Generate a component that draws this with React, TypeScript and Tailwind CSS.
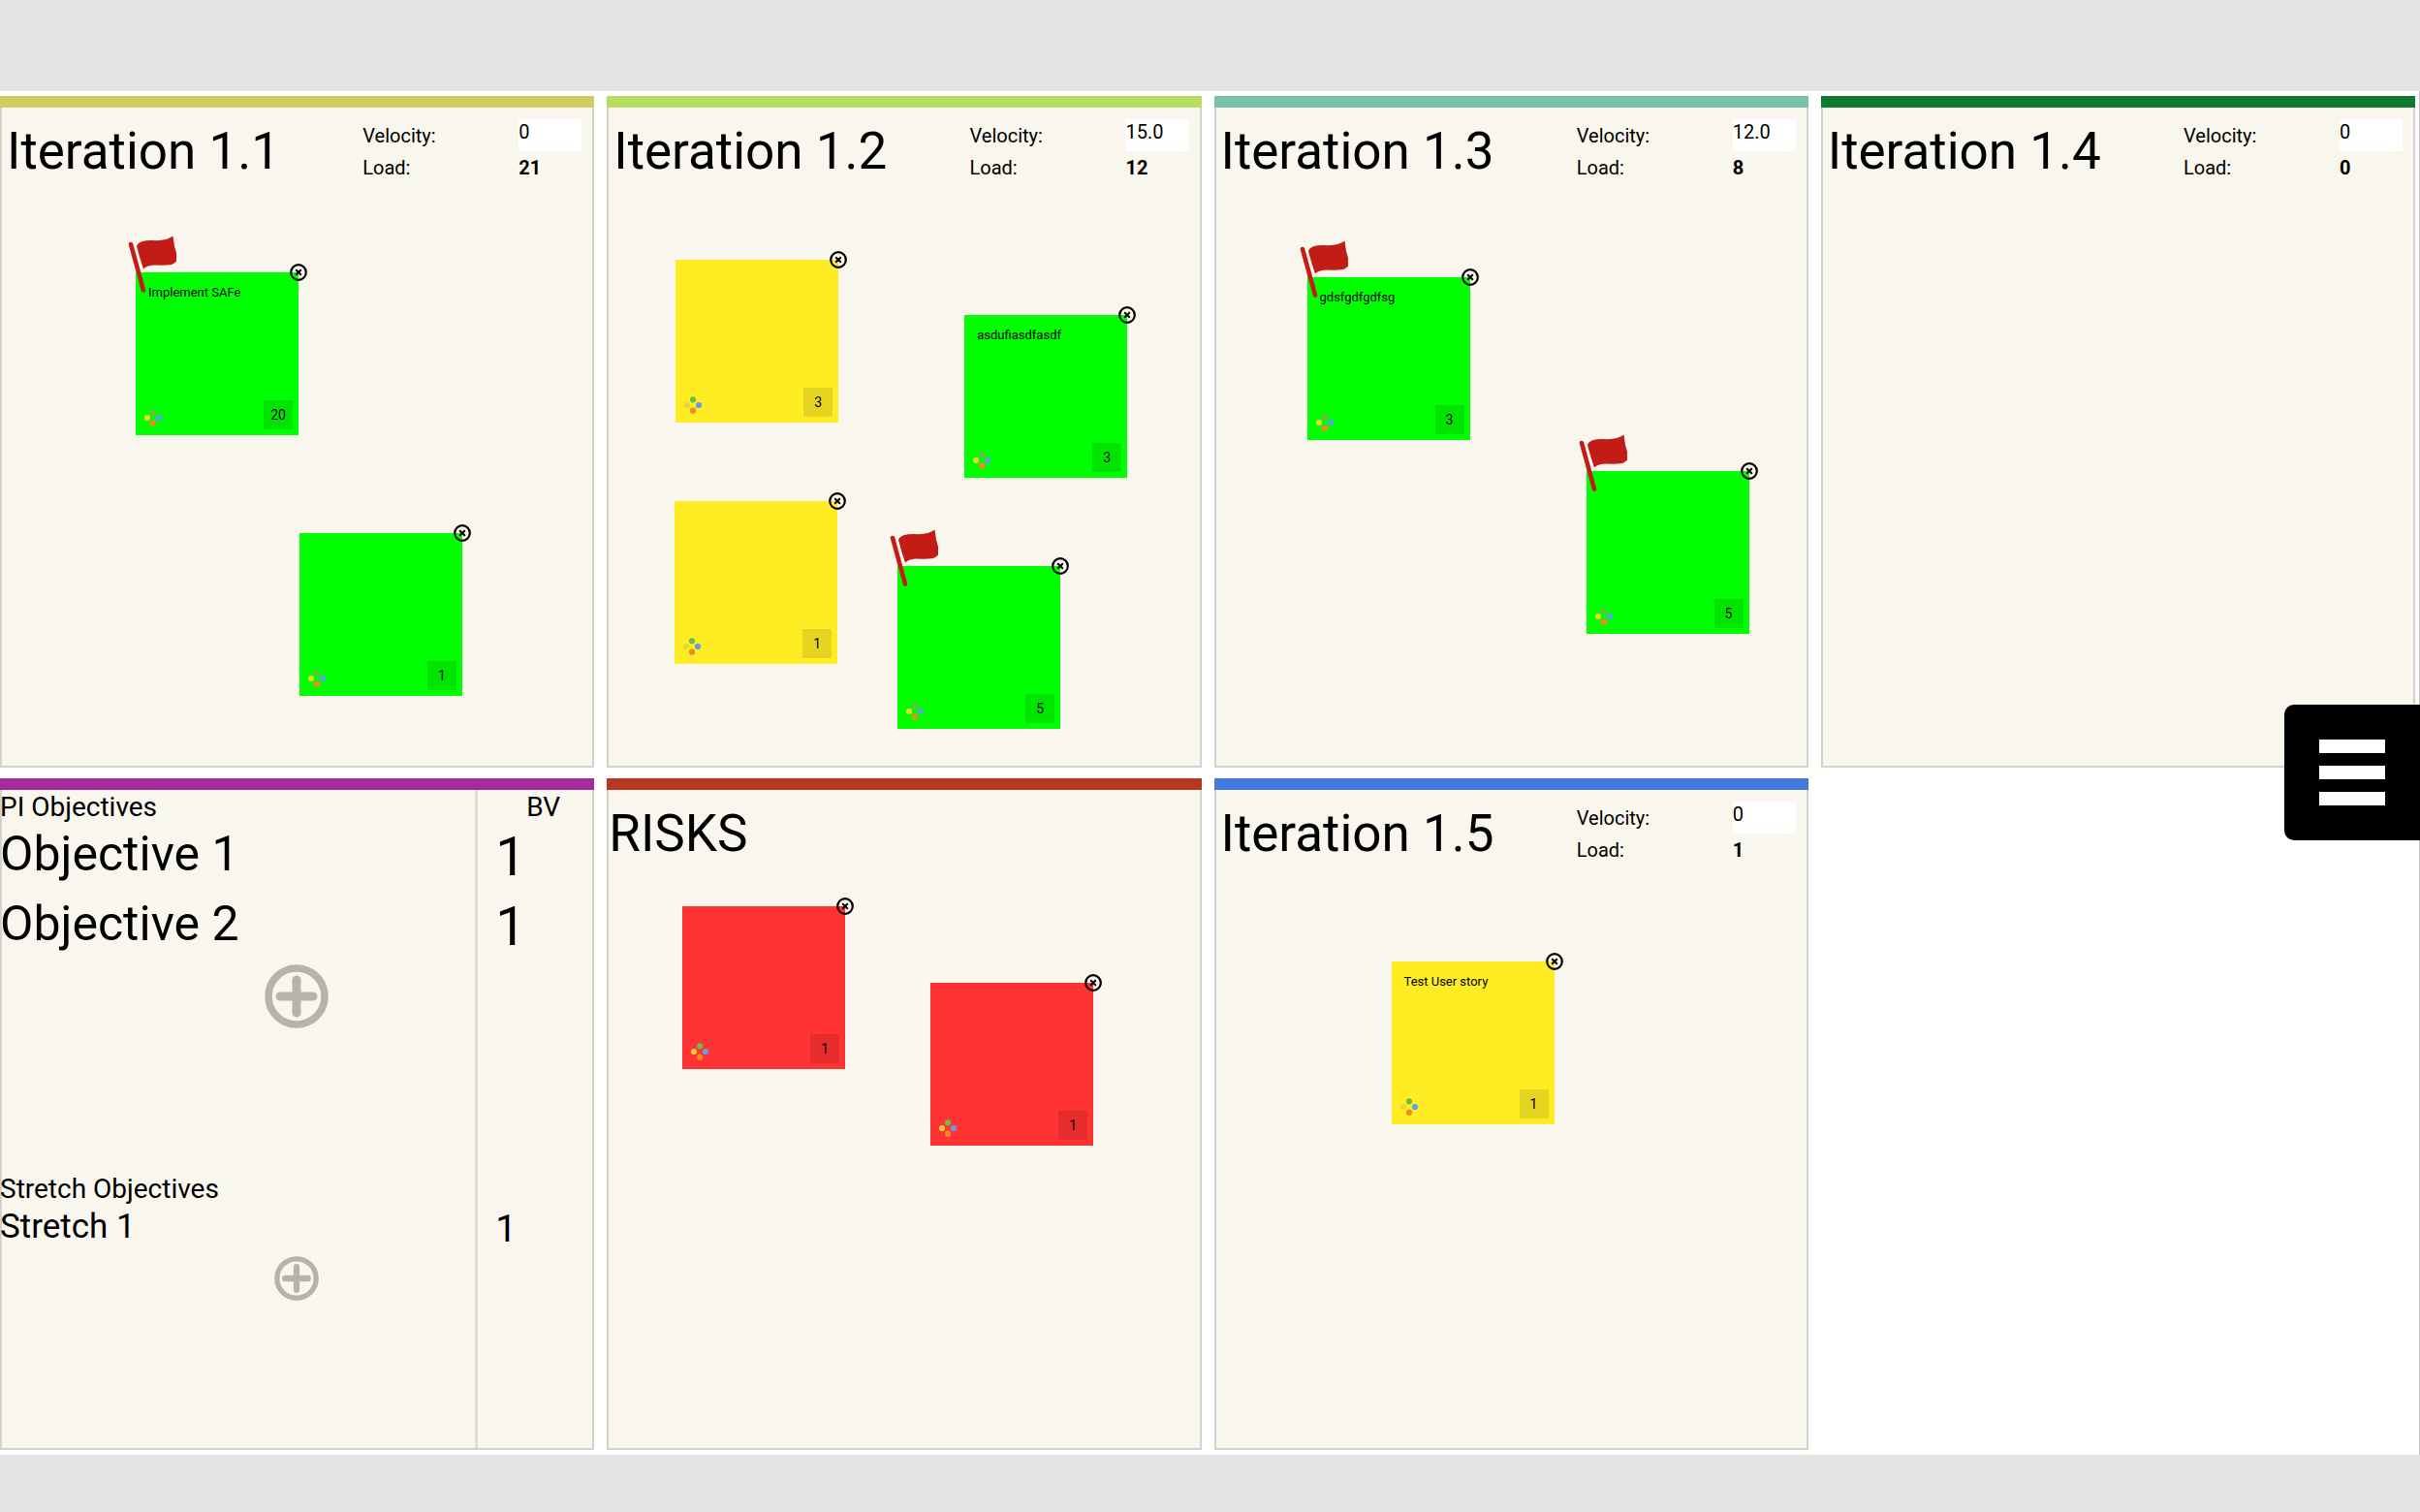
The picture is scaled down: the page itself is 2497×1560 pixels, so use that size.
import React, { useState } from "react";

type Note = {
  x: number;
  y: number;
  color: "green" | "yellow" | "red";
  points: number;
  text?: string;
  flagged?: boolean;
};

type Objective = {
  id: string;
  title: string;
  value: number;
};

const NOTE_COLORS = {
  green: "bg-[#00ff00]",
  yellow: "bg-[#ffed24]",
  red: "bg-[#ff3333]",
};

const FlagIcon = () => (
  <svg
    viewBox="0 0 52 62"
    className="absolute -left-[10px] -top-[41px] h-[62px] w-[52px] pointer-events-none"
    aria-hidden="true"
  >
    <path d="M5 12L18 59.500" stroke="#c31b15" strokeWidth="4.600" strokeLinecap="round" />
    <path
      d="M11 14Q12 10.500 17 9Q22 7.500 32 8.200Q42 8 48.500 3.500L50 14L54 28Q50 32 47 33Q40 34 30 33.500Q22 33.500 18 37.500L14 25Z"
      fill="#c31b15"
    />
  </svg>
);

const DotsIcon = () => (
  <svg viewBox="0 0 20 20" className="h-5 w-5" aria-hidden="true">
    <circle cx="10" cy="4.300" r="3.100" fill="#6cbd45" />
    <circle cx="4" cy="10" r="3.100" fill="#efd22f" />
    <circle cx="16" cy="10" r="3.100" fill="#5a9ff0" />
    <circle cx="10" cy="15.700" r="3.100" fill="#f08a24" />
  </svg>
);

const StickyNote = ({ note }: { note: Note }) => (
  <div
    className={`absolute flex h-[168px] w-[168px] flex-col justify-between ${NOTE_COLORS[note.color]}`}
    style={{ left: note.x, top: note.y }}
  >
    <p className="pl-[13px] pt-[13px] text-[13px] leading-4">{note.text}</p>
    <div className="flex items-center justify-between pb-[6px] pl-2 pr-[6px]">
      <div className="pt-[6px]">
        <DotsIcon />
      </div>
      <span className="flex h-[30px] w-[30px] items-center justify-center bg-black/10 text-sm">
        {note.points}
      </span>
    </div>
    {note.flagged && <FlagIcon />}
    <button aria-label="Remove note" className="absolute -right-[10px] -top-[10px] h-5 w-5">
      <svg viewBox="0 0 20 20" fill="none" stroke="#000" className="h-5 w-5">
        <circle cx="10" cy="10" r="7.800" strokeWidth="2.200" />
        <path d="M7.200 7.200L12.800 12.800M12.800 7.200L7.200 12.800" strokeWidth="2" />
      </svg>
    </button>
  </div>
);

const Card = ({ bar, children }: { bar: string; children: React.ReactNode }) => (
  <section className="relative flex min-h-[693px] flex-col border-2 border-t-0 border-[#d3d2cb] bg-[#f9f6ee]">
    <div className={`-mx-[2px] h-3 shrink-0 ${bar}`} />
    {children}
  </section>
);

const Notes = ({ notes }: { notes: Note[] }) => (
  <>
    {notes.map((note, i) => (
      <StickyNote key={i} note={note} />
    ))}
  </>
);

const Iteration = ({
  name,
  bar,
  initialVelocity,
  load,
  notes,
}: {
  name: string;
  bar: string;
  initialVelocity: string;
  load: number;
  notes: Note[];
}) => {
  const [velocity, setVelocity] = useState<string>(initialVelocity);
  const id = `velocity-${name}`;
  return (
    <Card bar={bar}>
      <div className="flex items-start justify-between pl-[5px] pr-[11px] pt-3">
        <h2 className="pt-px text-[53px] leading-[64px]">{`Iteration ${name}`}</h2>
        <div className="grid grid-cols-[161px_65px] text-xl leading-[33px]">
          <label htmlFor={id} className="pt-px">
            Velocity:
          </label>
          <input
            id={id}
            type="text"
            value={velocity}
            onChange={(e) => setVelocity(e.target.value)}
            className="h-[33px] w-full bg-white pb-2 leading-6"
          />
          <span>Load:</span>
          <span className="font-bold">{load}</span>
        </div>
      </div>
      <Notes notes={notes} />
    </Card>
  );
};

const PlusButton = ({ label, size }: { label: string; size: string }) => (
  <button aria-label={label} className={`self-center ${size}`}>
    <svg viewBox="0 0 66 66" fill="none" stroke="#b6b3ac" className="h-full w-full">
      <circle cx="33" cy="33" r="29" strokeWidth="7.500" />
      <path d="M33 16V50M16 33H50" strokeWidth="9" strokeLinecap="round" />
    </svg>
  </button>
);

const ObjectiveRow = ({
  item,
  row,
  titleSize,
  valueSize,
}: {
  item: Objective;
  row: string;
  titleSize: string;
  valueSize: string;
}) => (
  <li className={`flex ${row}`}>
    <span className={`flex-1 ${titleSize}`}>{item.title}</span>
    <span className={`w-[100px] pt-[2px] ${valueSize}`}>{item.value}</span>
  </li>
);

const objectives: Objective[] = [
  { id: "o1", title: "Objective 1", value: 1 },
  { id: "o2", title: "Objective 2", value: 1 },
];

const stretchObjectives: Objective[] = [{ id: "s1", title: "Stretch 1", value: 1 }];

const Objectives = () => (
  <Card bar="bg-[#a62a9c]">
    <div className="absolute bottom-0 right-[118px] top-3 w-[3px] bg-[#dfddd6]" />
    <div className="relative -ml-[2px] flex flex-col">
      <div className="flex pt-[2px] text-[28px] leading-8">
        <h2 className="flex-1">PI Objectives</h2>
        <span className="w-[68px]">BV</span>
      </div>
      <ul className="pb-[2px]">
        {objectives.map((item) => (
          <ObjectiveRow
            key={item.id}
            item={item}
            row="h-[72px]"
            titleSize="text-[50px] leading-[64px]"
            valueSize="text-[56px] leading-[66px]"
          />
        ))}
      </ul>
      <PlusButton label="Add objective" size="h-[66px] w-[66px]" />
      <div className="pb-[3px] pt-[150px] text-[28px] leading-8">
        <h2>Stretch Objectives</h2>
      </div>
      <ul>
        {stretchObjectives.map((item) => (
          <ObjectiveRow
            key={item.id}
            item={item}
            row="h-[50px]"
            titleSize="text-[35px] leading-10"
            valueSize="text-[39px] leading-10"
          />
        ))}
      </ul>
      <PlusButton label="Add stretch objective" size="h-[46px] w-[46px]" />
    </div>
  </Card>
);

const Risks = ({ notes }: { notes: Note[] }) => (
  <Card bar="bg-[#b83720]">
    <h2 className="pt-[13px] text-[53px] leading-[64px]">RISKS</h2>
    <Notes notes={notes} />
  </Card>
);

const App = () => {
  return (
    <div
      className="relative min-h-screen bg-[#e4e4e4] py-[94px] text-black"
      style={{ fontFamily: 'Roboto, "Liberation Sans", sans-serif' }}
    >
      <main className="grid grid-cols-4 gap-x-[13px] gap-y-[11px] border-r border-[#c4c4c4] bg-white pb-[5px] pr-1 pt-[5px]">
        <Iteration
          name="1.1"
          bar="bg-[#d2cb61]"
          initialVelocity="0"
          load={21}
          notes={[
            { x: 138, y: 182, color: "green", points: 20, text: "Implement SAFe", flagged: true },
            { x: 307, y: 451, color: "green", points: 1 },
          ]}
        />
        <Iteration
          name="1.2"
          bar="bg-[#b5de62]"
          initialVelocity="15.0"
          load={12}
          notes={[
            { x: 69, y: 169, color: "yellow", points: 3 },
            { x: 367, y: 226, color: "green", points: 3, text: "asdufiasdfasdf" },
            { x: 68, y: 418, color: "yellow", points: 1 },
            { x: 298, y: 485, color: "green", points: 5, flagged: true },
          ]}
        />
        <Iteration
          name="1.3"
          bar="bg-[#79c0ad]"
          initialVelocity="12.0"
          load={8}
          notes={[
            { x: 94, y: 187, color: "green", points: 3, text: "gdsfgdfgdfsg", flagged: true },
            { x: 382, y: 387, color: "green", points: 5, flagged: true },
          ]}
        />
        <Iteration name="1.4" bar="bg-[#0f7a2e]" initialVelocity="0" load={0} notes={[]} />
        <Objectives />
        <Risks
          notes={[
            { x: 76, y: 132, color: "red", points: 1 },
            { x: 332, y: 211, color: "red", points: 1 },
          ]}
        />
        <Iteration
          name="1.5"
          bar="bg-[#4279dc]"
          initialVelocity="0"
          load={1}
          notes={[{ x: 181, y: 189, color: "yellow", points: 1, text: "Test User story" }]}
        />
      </main>
      <button
        aria-label="Open menu"
        className="fixed right-0 top-[727px] flex h-[140px] w-[140px] flex-col justify-center gap-[13px] rounded-l-[10px] bg-black pl-9"
      >
        <span className="h-[14px] w-[68px] bg-white" />
        <span className="h-[14px] w-[68px] bg-white" />
        <span className="h-[14px] w-[68px] bg-white" />
      </button>
    </div>
  );
};

export default App;
